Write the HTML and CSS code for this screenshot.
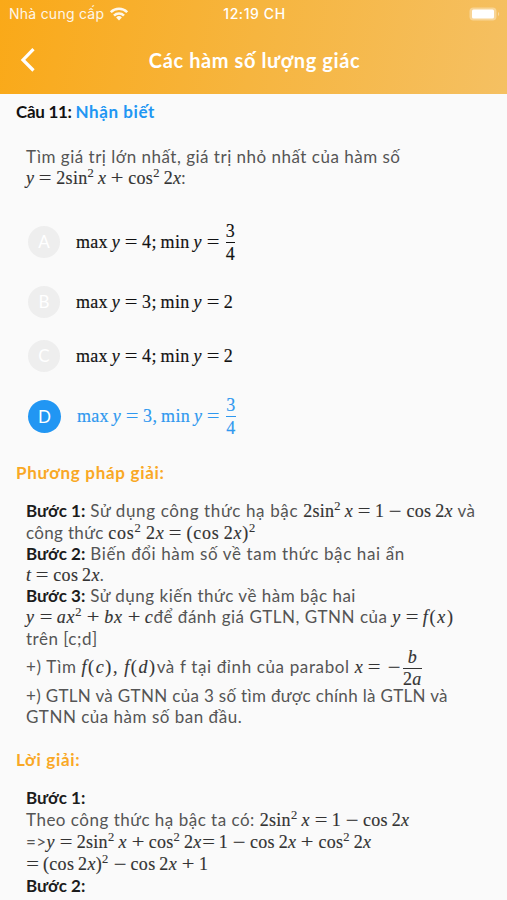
FILE: index.html
```
<!DOCTYPE html>
<html lang="vi">
<head>
  <meta charset="UTF-8" />
  <meta name="viewport" content="width=device-width, initial-scale=1.0" />
  <title>Các hàm số lượng giác</title>
  <link rel="stylesheet" href="styles.css">
</head>
<body>

  <header class="header">
    <div class="status-bar">
      <div class="carrier">
        <span>Nhà cung cấp</span>
        <svg class="wifi" width="18" height="14" viewBox="0 0 18 14" fill="none" stroke="#fff" stroke-width="2.6">
          <path d="M0.8 5.2a11.5 11.5 0 0 1 16.4 0" />
          <path d="M4 8.6a7.1 7.1 0 0 1 10 0" />
          <path d="M9 13.4L6.1 10.5a4.1 4.1 0 0 1 5.8 0z" fill="#fff" stroke="none" />
        </svg>
      </div>
      <span class="time">12:19 CH</span>
      <svg class="battery" width="31" height="14" viewBox="0 0 31 14">
        <rect x="0.5" y="0.5" width="27" height="13" rx="4" fill="#fff" fill-opacity="0.35" />
        <rect x="3" y="2.5" width="22" height="9" rx="1.5" fill="#fff" />
        <path d="M29 5v4c1.6-.6 1.6-3.4 0-4z" fill="#fff" fill-opacity="0.4" />
      </svg>
    </div>
    <div class="nav">
      <svg class="back" width="16" height="24" viewBox="0 0 16 24" fill="none" stroke="#fff" stroke-width="3.2">
        <path d="M13.5 1.2L3 12l10.5 10.5" />
      </svg>
      <h1>Các hàm số lượng giác</h1>
    </div>
  </header>

  <main>
    <h2 class="question-title">Câu 11: <span class="level">Nhận biết</span></h2>

    <div class="question">
      <p class="line">Tìm giá trị lớn nhất, giá trị nhỏ nhất của hàm số</p>
      <p class="line"><span class="math"><i>y</i><span class="op">=</span>2sin<sup>2</sup>&thinsp;<i>x</i><span class="op">+</span>cos<sup>2</sup>&thinsp;2<i>x</i></span>:</p>
    </div>

    <div class="options">
      <div class="option tall">
        <span class="circle">A</span>
        <span class="math"><span>max&thinsp;<i>y</i><span class="op">=</span>4;&thinsp;min&thinsp;<i>y</i><span class="op">=</span></span><span class="frac"><span>3</span><span>4</span></span></span>
      </div>
      <div class="option">
        <span class="circle">B</span>
        <span class="math"><span>max&thinsp;<i>y</i><span class="op">=</span>3;&thinsp;min&thinsp;<i>y</i><span class="op">=</span>2</span></span>
      </div>
      <div class="option">
        <span class="circle">C</span>
        <span class="math"><span>max&thinsp;<i>y</i><span class="op">=</span>4;&thinsp;min&thinsp;<i>y</i><span class="op">=</span>2</span></span>
      </div>
      <div class="option tall selected">
        <span class="circle">D</span>
        <span class="math"><span>max&thinsp;<i>y</i><span class="op">=</span>3,&thinsp;min&thinsp;<i>y</i><span class="op">=</span></span><span class="frac"><span>3</span><span>4</span></span></span>
      </div>
    </div>

    <h3 class="method-title">Phương pháp giải:</h3>
    <div class="method">
      <p class="line loose"><b>Bước 1:</b> Sử dụng công thức hạ bậc <span class="math">2sin<sup>2</sup>&thinsp;<i>x</i><span class="op">=</span>1<span class="op">−</span>cos&thinsp;2<i>x</i></span> và</p>
      <p class="line tight">công thức <span class="math wide">cos<sup>2</sup>&thinsp;2<i>x</i><span class="op">=</span>(cos&thinsp;2<i>x</i>)<sup>2</sup></span></p>
      <p class="line loose"><b>Bước 2:</b> Biến đổi hàm số về tam thức bậc hai ẩn</p>
      <p class="line"><span class="math"><i>t</i><span class="op">=</span>cos&thinsp;2<i>x</i></span>.</p>
      <p class="line"><b>Bước 3:</b> Sử dụng kiến thức về hàm bậc hai</p>
      <p class="line"><span class="math wide"><i>y</i><span class="op">=</span><i>ax</i><sup>2</sup><span class="op">+</span><i>bx</i><span class="op">+</span><i>c</i></span>để đánh giá GTLN, GTNN của <span class="math"><i>y</i><span class="op">=</span><span class="fn"><i>f</i>(<i>x</i>)</span></span></p>
      <p class="line">trên [c;d]</p>
      <p class="line with-frac loose">+) Tìm <span class="math fn"><i>f</i>(<i>c</i>),&thinsp;<i>f</i>(<i>d</i>)</span>và f tại đỉnh của parabol <span class="math"><i>x</i><span class="op">=</span><span class="op sign">−</span><span class="frac"><i>b</i><span>2<i>a</i></span></span></span></p>
      <p class="line tight">+) GTLN và GTNN của 3 số tìm được chính là GTLN và</p>
      <p class="line">GTNN của hàm số ban đầu.</p>
    </div>

    <h3 class="answer-title">Lời giải:</h3>
    <div class="answer">
      <p class="line"><b>Bước 1:</b></p>
      <p class="line">Theo công thức hạ bậc ta có: <span class="math">2sin<sup>2</sup>&thinsp;<i>x</i><span class="op">=</span>1<span class="op">−</span>cos&thinsp;2<i>x</i></span></p>
      <p class="line tight">=&gt;<span class="math"><i>y</i><span class="op">=</span>2sin<sup>2</sup>&thinsp;<i>x</i><span class="op">+</span>cos<sup>2</sup>&thinsp;2<i>x</i><span class="op lead">=</span>1<span class="op">−</span>cos&thinsp;2<i>x</i><span class="op">+</span>cos<sup>2</sup>&thinsp;2<i>x</i></span></p>
      <p class="line"><span class="math"><span class="op lead">=</span>(cos&thinsp;2<i>x</i>)<sup>2</sup><span class="op">−</span>cos&thinsp;2<i>x</i><span class="op">+</span>1</span></p>
      <p class="line"><b>Bước 2:</b></p>
    </div>
  </main>

</body>
</html>
```
FILE: styles.css
```
* {
  box-sizing: border-box;
}
body {
  margin: 0;
  height: 900px;
  overflow: hidden;
  font-family: Lato, 'Noto Sans', sans-serif;
  font-size: 17px;
  color: #555;
  background-color: #fafafa;
}
h1, h2, h3, p {
  margin: 0;
}
.header {
  height: 94px;
  color: white;
  background: linear-gradient(100deg, #faa918 0%, #f6b53f 50%, #f5c062 100%);
}
.status-bar {
  display: grid;
  grid-template-columns: 1fr auto 1fr;
  align-items: center;
  height: 27px;
  padding: 0 7px 0 9px;
  font-family: Inter, sans-serif;
  font-size: 14px;
}
.carrier {
  display: flex;
  align-items: center;
  gap: 6px;
  opacity: 0.9;
  letter-spacing: 0.25px;
}
.time {
  font-weight: 500;
  letter-spacing: 0.6px;
}
.battery {
  justify-self: end;
}
.nav {
  display: flex;
  align-items: center;
  height: 65px;
  padding: 0 20px;
}
.nav h1 {
  flex: 1;
  margin-right: 14px;
  text-align: center;
  font-size: 20px;
  letter-spacing: 0.6px;
}
h2, h3 {
  padding-left: 16px;
  font-size: 17px;
  line-height: 22px;
  letter-spacing: 0.7px;
}
.question-title {
  padding-top: 7px;
  letter-spacing: -0.3px;
  color: #111;
}
.level {
  letter-spacing: 0.6px;
  color: #2196f3;
}
.question, .method, .answer {
  padding-left: 26px;
}
.question {
  padding-top: 23px;
}
.line {
  height: 21.2px;
  line-height: 21.2px;
  letter-spacing: 0.5px;
  white-space: nowrap;
}
.line.loose {
  letter-spacing: 0.63px;
}
.line.tight {
  letter-spacing: 0.33px;
}
.line b {
  letter-spacing: 0;
  color: #1c1c1c;
}

/* formulas */
.math {
  font-family: 'Liberation Serif', serif;
  font-size: 18px;
  letter-spacing: 0.3px;
  color: #333;
  -webkit-text-stroke: 0.15px currentColor;
}
.math.wide {
  letter-spacing: 0.75px;
}
.fn, .math.fn {
  letter-spacing: 1.8px;
}
.math.fn {
  letter-spacing: 1.6px;
}
.math sup {
  font-size: 12.5px;
  line-height: 0;
  vertical-align: 7px;
}
.op {
  display: inline-block;
  width: 22px;
  text-align: center;
  line-height: 1;
  letter-spacing: 0;
  transform: scaleX(1.25);
}
.op.lead {
  width: 13px;
  margin-right: 4px;
}
.op.sign {
  width: 14px;
  margin: 0 2px;
}
.frac {
  display: inline-flex;
  flex-direction: column;
  align-items: center;
  vertical-align: middle;
  line-height: 22px;
}
.frac > :first-child {
  align-self: stretch;
  text-align: center;
  border-bottom: 1px solid currentColor;
}

/* answers */
.options {
  padding: 21px 0 0 28px;
}
.option {
  display: flex;
  align-items: center;
  gap: 16px;
  height: 54px;
}
.option.tall {
  height: 66px;
}
.option .math {
  display: flex;
  align-items: center;
  gap: 2px;
  color: #111;
}
.circle {
  width: 32px;
  height: 32px;
  border-radius: 50%;
  line-height: 32px;
  text-align: center;
  color: white;
  background-color: #eee;
}
.option.selected .circle {
  width: 33px;
  height: 33px;
  line-height: 33px;
  background-color: #2196f3;
}
.option.selected .math {
  color: #2f98ef;
}

/* solution */
.method-title, .answer-title {
  color: #f9a825;
}
.method-title {
  padding-top: 13px;
}
.method {
  padding-top: 16px;
}
.with-frac {
  height: 36px;
  line-height: 35px;
}
.with-frac .frac {
  margin: -6px 0;
  line-height: 21px;
}
.answer-title {
  padding-top: 22px;
}
.answer {
  padding-top: 15.5px;
}
.answer .line {
  height: 22.2px;
  line-height: 22.2px;
}
```
